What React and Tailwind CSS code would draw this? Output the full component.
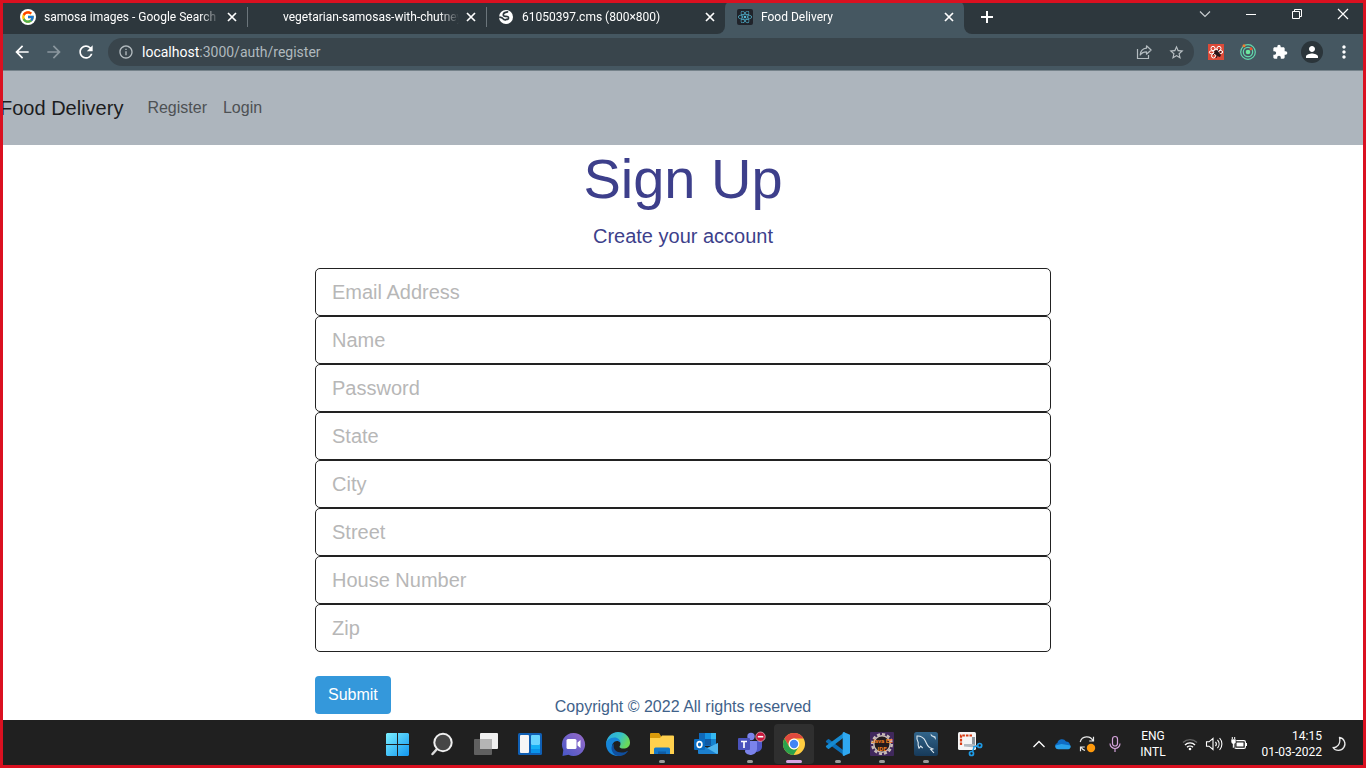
import React from 'react';
import {
  MdArrowBack,
  MdArrowForward,
  MdRefresh,
  MdInfoOutline,
  MdStarBorder,
  MdExtension,
  MdPerson,
  MdMoreVert,
} from 'react-icons/md';
import { FcGoogle } from 'react-icons/fc';
import { FaReact } from 'react-icons/fa';

const fields = [
  { id: 'email', label: 'Email Address', type: 'email' },
  { id: 'name', label: 'Name', type: 'text' },
  { id: 'password', label: 'Password', type: 'password' },
  { id: 'state', label: 'State', type: 'text' },
  { id: 'city', label: 'City', type: 'text' },
  { id: 'street', label: 'Street', type: 'text' },
  { id: 'house', label: 'House Number', type: 'text' },
  { id: 'zip', label: 'Zip', type: 'text' },
];

function GlobeIcon() {
  return (
    <svg viewBox="0 0 16 16" className="size-4">
      <circle cx="8" cy="8" r="7" fill="#fff" />
      <path
        d="M9.500 2.800C7.500 3 5.500 4 5.300 5.500c-.2 1.600 1.300 1.900 2.600 1.800 1.600-.1 2.600.4 2.600 1.600 0 1.300-1.200 1.700-2.300 1.500M1.800 8.200c1.400.2 2.600.5 3.200 1.500.5 1 1.300 1.300 2.600 1.200"
        fill="none"
        stroke="#2d373d"
        strokeWidth="1.700"
        strokeLinecap="round"
      />
    </svg>
  );
}

function GoogleBadge() {
  return (
    <span className="flex size-4 items-center justify-center rounded-full bg-white">
      <FcGoogle className="size-[14px]" />
    </span>
  );
}

function ReactBadge() {
  return (
    <span className="flex size-4 items-center justify-center rounded-xs bg-[#20232a]">
      <FaReact className="size-[14px] text-[#53b9d6]" />
    </span>
  );
}

function Cross() {
  return (
    <svg viewBox="0 0 16 16" className="size-4" fill="none" stroke="currentColor" strokeWidth="1.700">
      <path d="M4 4l8 8M12 4l-8 8" />
    </svg>
  );
}

function Tab({ title, icon, divider, active }) {
  return (
    <div
      className={
        active
          ? 'flex h-full w-[239px] shrink-0 items-center rounded-t-lg bg-[#455761] pr-[7px]'
          : 'flex h-full w-[239px] shrink-0 items-center pr-[7px]'
      }
    >
      <span className={divider ? 'h-5 w-px bg-[#6b757b]' : 'h-5 w-px'} />
      <span className="ml-[11px] size-4 shrink-0">{icon}</span>
      <span className="mr-1 ml-2 flex-1 overflow-hidden whitespace-nowrap [mask-image:linear-gradient(to_left,transparent,black_20px)]">
        {title}
      </span>
      <button type="button" aria-label="Close tab" className="size-4">
        <Cross />
      </button>
    </div>
  );
}

function TabStrip() {
  return (
    <div className="flex h-[34px] bg-[#455761] font-[Roboto,sans-serif] text-xs text-white">
      <div className="flex rounded-br-lg bg-[#2d373d] pl-2">
        <Tab title="samosa images - Google Search" icon={<GoogleBadge />} />
        <Tab title="vegetarian-samosas-with-chutney" divider />
        <Tab title="61050397.cms (800×800)" icon={<GlobeIcon />} divider />
      </div>
      <div className="bg-[#2d373d]">
        <Tab title="Food Delivery" icon={<ReactBadge />} active />
      </div>
      <div className="flex flex-1 rounded-bl-lg bg-[#2d373d]">
        <button type="button" aria-label="New tab" className="ml-[15px] size-4 self-center">
          <svg viewBox="0 0 16 16" fill="none" stroke="currentColor" strokeWidth="2">
            <path d="M8 2v12M2 8h12" />
          </svg>
        </button>
        <div className="ml-auto flex h-7">
          <button type="button" aria-label="Search tabs" className="flex w-[46px] items-center justify-center">
            <svg viewBox="0 0 12 12" className="size-3" fill="none" stroke="#c8cdd0" strokeWidth="1.200">
              <path d="M1 3.500l5 5 5-5" />
            </svg>
          </button>
          <button type="button" aria-label="Minimize" className="flex w-[46px] items-center justify-center">
            <svg viewBox="0 0 12 12" className="size-3" fill="none" stroke="currentColor">
              <path d="M1 6.500h10" />
            </svg>
          </button>
          <button type="button" aria-label="Restore" className="flex w-[46px] items-center justify-center">
            <svg viewBox="0 0 12 12" className="size-3" fill="none" stroke="currentColor">
              <path d="M1.500 3.500h7v7h-7zM3.500 3.500v-2h7v7h-2" />
            </svg>
          </button>
          <button type="button" aria-label="Close" className="flex w-[46px] items-center justify-center">
            <svg viewBox="0 0 12 12" className="size-3" fill="none" stroke="currentColor" strokeWidth="1.200">
              <path d="M1 1l10 10M11 1L1 11" />
            </svg>
          </button>
        </div>
      </div>
    </div>
  );
}

function ToolButton({ label, children }) {
  return (
    <button type="button" aria-label={label} className="flex h-7 w-8 shrink-0 items-center justify-center">
      {children}
    </button>
  );
}

function Toolbar() {
  return (
    <div className="flex h-[37px] items-center border-b border-[#76838b] bg-[#455761] px-1.5 text-white">
      <ToolButton label="Back">
        <MdArrowBack className="size-5" />
      </ToolButton>
      <ToolButton label="Forward">
        <MdArrowForward className="size-5 text-[#8b979e]" />
      </ToolButton>
      <ToolButton label="Reload">
        <MdRefresh className="size-5" />
      </ToolButton>
      <div className="mx-1.5 flex h-7 flex-1 items-center rounded-full bg-[#39454c] pl-2.5 pr-0.5">
        <MdInfoOutline className="size-4 text-[#b4bcc0]" />
        <a href="#address" className="ml-2 flex-1 font-[Roboto,sans-serif] text-sm text-[#b0b9be]">
          <span className="text-white">localhost</span>:3000/auth/register
        </a>
        <ToolButton label="Share this page">
          <svg viewBox="0 0 16 16" className="size-4" fill="none" stroke="#b4bcc0" strokeWidth="1.200">
            <path d="M1.500 5v9.500h11V11" />
            <path d="M10.500 1.800l4.600 4.200-4.600 4.200V7.800C7.600 7.800 5.600 8.800 4.200 11c.3-3.800 2.500-6.400 6.300-6.800z" strokeLinejoin="round" />
          </svg>
        </ToolButton>
        <ToolButton label="Bookmark this tab">
          <MdStarBorder className="size-[17px] text-[#b9c0c4]" />
        </ToolButton>
      </div>
      <ToolButton label="Image extension">
        <svg viewBox="0 0 16 16" className="size-4">
          <rect width="16" height="16" fill="#dc4a38" />
          <g fill="none" stroke="#fff" strokeWidth="1">
            <ellipse cx="5" cy="4.500" rx="2" ry="2.200" />
            <ellipse cx="11" cy="4.500" rx="2" ry="2.200" />
            <ellipse cx="3.500" cy="8.300" rx="2.200" ry="1.500" />
            <ellipse cx="12.500" cy="8" rx="2.200" ry="1.500" />
            <ellipse cx="5.500" cy="11.800" rx="2" ry="2.200" />
            <circle cx="8" cy="6.500" r="1.500" />
          </g>
          <path d="M6 7l3-1 4 5-1 2-3-1-2-2z" fill="#25151a" />
          <path d="M7 9l-2 2M9 12l-1 2M12 9l1-2M10 7l1-2" stroke="#25151a" />
        </svg>
      </ToolButton>
      <ToolButton label="Radar extension">
        <svg viewBox="0 0 16 16" className="size-4" fill="none">
          <circle cx="8" cy="8" r="7.300" stroke="#62d9ac" strokeWidth="1.200" />
          <circle cx="8" cy="8" r="4.700" stroke="#62d9ac" strokeWidth="1.200" />
          <circle cx="8" cy="8" r="2.300" fill="#6ee7a0" />
          <circle cx="4" cy="1.800" r="1.500" fill="#f08030" />
          <circle cx="11" cy="4.800" r="1.500" fill="#f0502c" />
        </svg>
      </ToolButton>
      <ToolButton label="Extensions">
        <MdExtension className="size-4" />
      </ToolButton>
      <ToolButton label="Profile">
        <span className="flex size-[22px] items-center justify-center rounded-full bg-[#2b353a]">
          <MdPerson className="size-[18px]" />
        </span>
      </ToolButton>
      <ToolButton label="Menu">
        <MdMoreVert className="size-5" />
      </ToolButton>
    </div>
  );
}

function SiteNav() {
  return (
    <nav className="flex h-[74px] items-center bg-[#adb5bd]">
      <a href="#home" className="mr-4 text-xl text-[#1c1d1f]">
        Food Delivery
      </a>
      <a href="#register" className="px-2 text-base text-[#4d5154]">
        Register
      </a>
      <a href="#login" className="px-2 text-base text-[#4d5154]">
        Login
      </a>
    </nav>
  );
}

function SignUp() {
  return (
    <main className="flex-1">
      <div className="mx-auto max-w-[736px]">
        <h1 className="mb-2 text-center text-[56px] leading-[68px] text-[#3d3f8b]">Sign Up</h1>
        <p className="mb-[17px] text-center text-xl leading-[30px] text-[#3d3f8b]">Create your account</p>
        <form id="sign-up" onSubmit={(event) => event.preventDefault()}>
          {fields.map((field) => (
            <input
              key={field.id}
              id={field.id}
              name={field.id}
              type={field.type}
              aria-label={field.label}
              placeholder={field.label}
              className="block h-12 w-full rounded-[5px] border border-[#222222] bg-white px-4 text-xl text-[#222222] placeholder:text-[#b7b7b7]"
            />
          ))}
        </form>
        <div className="mt-6 grid grid-cols-[1fr_auto_1fr]">
          <button
            type="submit"
            form="sign-up"
            className="h-[38px] self-start justify-self-start rounded bg-[#3498db] px-[13px] text-base text-white"
          >
            Submit
          </button>
          <footer className="mt-[19px] text-base leading-6 text-[#3f628a]">Copyright © 2022 All rights reserved</footer>
        </div>
      </div>
    </main>
  );
}

const apps = [
  {
    name: 'Start',
    art: (
      <>
        <linearGradient id="win" x1="0" y1="0" x2="1" y2="1">
          <stop offset="0" stopColor="#7aefff" />
          <stop offset="1" stopColor="#1296f0" />
        </linearGradient>
        <path d="M2 1h10v11H1V2zM13 1h10l1 1v10H13zM1 13h11v11H2l-1-1zM13 13h11v10l-1 1H13z" fill="url(#win)" />
      </>
    ),
  },
  {
    name: 'Search',
    art: (
      <>
        <path d="M8.500 16.500L3.500 22" stroke="#dcdcdc" strokeWidth="2.500" strokeLinecap="round" />
        <circle cx="14" cy="10.500" r="8.700" fill="#464646" stroke="#efefef" strokeWidth="2" />
      </>
    ),
  },
  {
    name: 'Task view',
    art: (
      <>
        <rect x="7" y="1" width="18" height="16" rx="1" fill="#f0f0f0" />
        <rect x="1" y="7" width="18" height="16" rx="1" fill="#606060" />
        <path d="M7 7h12v10H7z" fill="#b4b4b4" />
      </>
    ),
  },
  {
    name: 'Widgets',
    art: (
      <>
        <rect x="1" y="1" width="24" height="22" rx="1.500" fill="#0f5fb4" />
        <rect x="3" y="3" width="9" height="18" rx="1" fill="#f6f6f6" />
        <rect x="14" y="3" width="9" height="10" rx="1" fill="#69d5ff" />
        <path d="M14 13h9v4h-9z" fill="#14b0f4" />
        <path d="M14 17h9v4h-9z" fill="#0a94ea" />
      </>
    ),
  },
  {
    name: 'Chat',
    art: (
      <>
        <linearGradient id="chat" x1="0" y1="1" x2="1" y2="0">
          <stop offset="0" stopColor="#4657c8" />
          <stop offset="1" stopColor="#9a6bc8" />
        </linearGradient>
        <path d="M12.500 1a11.500 11.500 0 1 1-5 21.800L1.500 24l.8-6A11.500 11.500 0 0 1 12.500 1z" fill="url(#chat)" />
        <rect x="5.500" y="7" width="10" height="10" rx="1.500" fill="#fff" />
        <path d="M16.500 10.500l3-2.500v8l-3-2.500z" fill="#fff" />
      </>
    ),
  },
  {
    name: 'Edge',
    art: (
      <>
        <linearGradient id="edgeTop" x1="0" y1="0" x2="1" y2=".4">
          <stop offset="0" stopColor="#2aa7e0" />
          <stop offset=".6" stopColor="#35c1c8" />
          <stop offset="1" stopColor="#6ad85a" />
        </linearGradient>
        <path d="M1 12C1.500 5 6.500 0 13 0c7 0 12 5 12 10.500 0 4-3 6-6.500 6-2.500 0-4-.8-4-1.800 0-.7 1-1.200 1-3C15.500 9 13 7 10 7 5 7 1.500 10 1 12z" fill="url(#edgeTop)" />
        <path d="M1 12c0-3.500 4-6.500 8.500-6.500 3.500 0 6 2.500 6 5.500-1-1.500-2.500-2-3.500-2-3 0-5 3-5 6 0 4.500 3 8 8 9h-2C6 24 1 18.500 1 12z" fill="#1685d8" />
        <path d="M9 12c-1.500 5 2.500 8.500 7.500 8.500 3 0 5-1 6.500-1.800C21.500 22 17.500 24 14 24c-5 0-7.500-4.500-7.500-8 0-2 1-3.300 2.500-4z" fill="#104f9e" />
      </>
    ),
  },
  {
    name: 'File Explorer',
    running: true,
    art: (
      <>
        <path d="M1 2q0-1 1-1h8l2 3v4H1z" fill="#d99a0b" />
        <path d="M1 6h10l2-2.500h11q1 0 1 1V22H1z" fill="#ffd04d" />
        <path d="M5 22v-5q0-1.500 1.500-1.500h13q1.500 0 1.500 1.500v5z" fill="#1377c8" />
        <path d="M9 22v-2.500h8V22z" fill="#0f5ca5" />
      </>
    ),
  },
  {
    name: 'Outlook',
    art: (
      <>
        <path d="M6 1h17v13H6z" fill="#1068b8" />
        <path d="M12 1h6v6h-6z" fill="#1490df" />
        <path d="M18 1h5v6h-5z" fill="#35b8f1" />
        <path d="M12 7h6v6h-6z" fill="#0f5aa5" />
        <path d="M18 7h5v6h-5z" fill="#1583d0" />
        <path d="M5 12l10 4 10-5v10q0 1-1 1H6q-1 0-1-1z" fill="#1c80cf" />
        <path d="M25 11v10q0 1-1 1l-10-6z" fill="#4db4ee" />
        <rect x="1" y="7" width="11" height="11" rx="1" fill="#0a6cc0" />
        <ellipse cx="6.500" cy="12.500" rx="2.400" ry="2.900" fill="none" stroke="#fff" strokeWidth="1.600" />
      </>
    ),
  },
  {
    name: 'Teams',
    running: true,
    art: (
      <>
        <circle cx="14" cy="4.500" r="3.700" fill="#7b83eb" />
        <path d="M18 9h6q1 0 1 1v5a5 5 0 0 1-7 4.500z" fill="#5059c9" />
        <path d="M9 9h10q1 0 1 1v7a6.500 6.500 0 0 1-12 3z" fill="#7b83eb" />
        <rect x="1" y="6" width="12" height="12" rx="1" fill="#4b53bc" />
        <path d="M4 9.500h6M7 9.500V16" stroke="#fff" strokeWidth="1.700" />
        <circle cx="23.500" cy="4.700" r="4.700" fill="#c9183c" stroke="#e8c4cc" strokeWidth=".7" />
        <path d="M20.800 4.700h5.500" stroke="#fff" strokeWidth="1.600" />
      </>
    ),
  },
  {
    name: 'Chrome',
    running: true,
    active: true,
    art: (
      <>
        <circle cx="13" cy="12" r="11" fill="#ffcd40" />
        <path d="M3.470 6.500A11 11 0 0 1 22.530 6.500H13A5.500 5.500 0 0 0 8.200 14.700z" fill="#e04a3f" />
        <path d="M3.470 6.500A11 11 0 0 0 12.500 23L17.800 14.700A5.500 5.500 0 0 1 8.200 14.700z" fill="#2ba24c" />
        <circle cx="13" cy="12" r="5.400" fill="#fff" />
        <circle cx="13" cy="12" r="4.200" fill="#4285f4" />
      </>
    ),
  },
  {
    name: 'Visual Studio Code',
    running: true,
    art: (
      <>
        <path d="M1.200 8.800l1.700-1.500q.6-.5 1.200 0L20 19.500V24L1.200 10.200q-.8-.7 0-1.400z" fill="#0b6fb8" />
        <path d="M1.200 15.200l1.700 1.500q.6.500 1.200 0L20 4.500V0L1.200 13.800q-.8.700 0 1.400z" fill="#168bd2" />
        <path d="M18.500 0L25 2.700v18.600L18.500 24q-.8-.3-.8-1.200V1.200q0-.9.8-1.200z" fill="#2fa8f0" />
      </>
    ),
  },
  {
    name: 'Java EE IDE',
    running: true,
    art: (
      <>
        <rect x="1" width="24" height="24" rx="1" fill="#40285c" />
        <circle cx="13" cy="12" r="9.800" fill="none" stroke="#c8bcb8" strokeWidth="2.400" strokeDasharray="3.100 2" />
        <circle cx="13" cy="12" r="8.200" fill="#241a1c" stroke="#c8bcb8" strokeWidth="1.500" />
        <text x="13" y="10.500" textAnchor="middle" fontSize="6" fontWeight="700" fill="#ef7d20">
          Java EE
        </text>
        <text x="13" y="18.500" textAnchor="middle" fontSize="6" fontWeight="700" fill="#ef7d20">
          IDE
        </text>
      </>
    ),
  },
  {
    name: 'MySQL Workbench',
    running: true,
    art: (
      <>
        <linearGradient id="sql" x1="0" y1="0" x2="0" y2="1">
          <stop offset="0" stopColor="#32658b" />
          <stop offset="1" stopColor="#173a5a" />
        </linearGradient>
        <rect x="1" width="24" height="24" rx="2.500" fill="url(#sql)" />
        <path d="M6 16.500c-.8-2-1.200-4-.8-6C4 8 3.500 6 4 4c4-.2 7 2 8.500 5.200 1 2.200 1.500 4.500 4 6.300l3.300 1.500-2 .6 3.200 3.200M6 16.500l1.700-2.500 2 2" fill="none" stroke="#dce8f0" strokeWidth="1.100" />
        <path d="M17.500 1.500l.5 2.500 3 1.500 2 2.500-.5-3.500-3-1z" fill="#d0e0ea" />
      </>
    ),
  },
  {
    name: 'Snipping Tool',
    art: (
      <>
        <rect x="1" width="18" height="18" rx="1.500" fill="#f5f5f5" />
        <path d="M4 13V3.500h11" fill="none" stroke="#d83b12" strokeWidth="2.200" strokeDasharray="2.600 1" />
        <path d="M15 5h3v9.500h-3z" fill="#8e959c" />
        <path d="M7 12h9l5 2-3 1.500L7 14.500z" fill="#b4bac0" />
        <circle cx="14.500" cy="21.500" r="2" fill="none" stroke="#1e9be6" strokeWidth="1.700" />
        <circle cx="22.700" cy="13.500" r="2" fill="none" stroke="#1e9be6" strokeWidth="1.700" />
        <path d="M15.500 19.500l1.500-4M20.500 14l-4.500 1" stroke="#1e9be6" strokeWidth="1.500" />
      </>
    ),
  },
];

function AppButton({ app }) {
  return (
    <button type="button" aria-label={app.name} className="flex h-12 w-11 items-center justify-center">
      <span
        className={
          app.active
            ? 'relative flex size-10 items-center justify-center rounded bg-[#2f2f2f]'
            : 'relative flex size-10 items-center justify-center'
        }
      >
        <svg viewBox="0 0 26 24" className="h-6 w-[26px] overflow-visible">
          {app.art}
        </svg>
        {app.running && (
          <span
            className={
              app.active
                ? 'absolute bottom-px h-[3px] w-4 rounded-full bg-[#d6a6e4]'
                : 'absolute bottom-px h-[3px] w-1.5 rounded-full bg-[#9a9a9a]'
            }
          />
        )}
      </span>
    </button>
  );
}

function Tray() {
  return (
    <div className="flex items-center justify-end pr-[19px]">
      <button type="button" aria-label="Hidden icons" className="flex w-6 justify-center">
        <svg viewBox="0 0 14 14" className="size-3.5" fill="none" stroke="#fff" strokeWidth="1.300">
          <path d="M1.500 10L7 4.500l5.500 5.500" />
        </svg>
      </button>
      <button type="button" aria-label="OneDrive" className="flex w-6 justify-center">
        <svg viewBox="0 0 16 16" className="size-4">
          <path d="M3 13a3 3 0 0 1-.6-5.900A4.700 4.700 0 0 1 11 5.500 4 4 0 0 1 13 13z" fill="#0f6cc4" />
          <path d="M3 13.200A3 3 0 0 1 .5 9.500l6-1.500 9 1.500a2.700 2.700 0 0 1-2 3.700z" fill="#28a0ea" />
        </svg>
      </button>
      <button type="button" aria-label="Updates" className="flex w-6 justify-center">
        <svg viewBox="0 0 18 18" className="size-[18px]" fill="none" stroke="#e8e8e8" strokeWidth="1.200">
          <path d="M2.200 7A6.800 6.800 0 0 1 15 6M15.500 1.800V6h-4.300M7 15.500A6.800 6.800 0 0 1 3 12M2.500 16.300V12h4.300" />
          <circle cx="13" cy="13" r="4.200" fill="#ff9a0c" stroke="none" />
        </svg>
      </button>
      <button type="button" aria-label="Microphone" className="flex w-8 justify-center">
        <svg viewBox="0 0 12 18" className="h-[18px] w-3" fill="none" stroke="#d5a3dc" strokeWidth="1.200">
          <rect x="3.500" y="1.500" width="5" height="9.500" rx="2.500" />
          <path d="M1 8.500a5 5 0 0 0 10 0M6 13.500V17" />
        </svg>
      </button>
      <button type="button" className="w-11 text-xs leading-4 text-white">
        ENG
        <br />
        INTL
      </button>
      <button type="button" aria-label="Network, volume and battery" className="ml-1 flex w-[72px] items-center justify-around">
        <svg viewBox="0 0 16 16" className="size-4" fill="none" strokeWidth="1.400">
          <path d="M1 6.500a10 10 0 0 1 14 0" stroke="#666" />
          <path d="M3 9a7 7 0 0 1 10 0M5 11.300a4.300 4.300 0 0 1 6 0" stroke="#fff" />
          <circle cx="8" cy="13" r="1.300" fill="#fff" />
        </svg>
        <svg viewBox="0 0 18 16" className="h-4 w-[18px]" fill="none" stroke="#fff" strokeWidth="1.100">
          <path d="M1.500 5.800h2.500L8 2.500v11L4 10.200H1.500zM10.500 5.800a3.500 3.500 0 0 1 0 4.400M12.500 3.800a6.500 6.500 0 0 1 0 8.400M14.600 2a9 9 0 0 1 0 12" />
        </svg>
        <svg viewBox="0 0 18 16" className="h-4 w-[18px]">
          <rect x="4.600" y="4.600" width="10.800" height="7.800" rx="1.500" fill="none" stroke="#fff" strokeWidth="1.200" />
          <path d="M6.500 6.500h7v4h-7zM15.500 7H17v3h-1.500z" fill="#fff" />
          <path d="M1 3h5v3.500L4.500 8v4H2.600V8L1 6.500z" fill="#fff" stroke="#202020" strokeWidth=".6" />
          <path d="M2.300 1v2M4.700 1v2" stroke="#fff" />
        </svg>
      </button>
      <button type="button" className="w-[71px] text-right text-xs leading-4 text-white">
        14:15
        <br />
        01-03-2022
      </button>
      <button type="button" aria-label="Notifications" className="ml-[9px]">
        <svg viewBox="0 0 16 16" className="size-4" fill="none" stroke="#e8e8e8" strokeWidth="1.300">
          <path d="M8.500 1.500a6.500 6.500 0 1 1-6.500 10c4 .5 8-3.500 6.500-10z" strokeLinejoin="round" />
        </svg>
      </button>
    </div>
  );
}

function Taskbar() {
  return (
    <div className="grid h-12 grid-cols-[1fr_auto_1fr] bg-[#202020] font-[Roboto,sans-serif]">
      <div />
      <div className="flex pl-0.5">
        {apps.map((app) => (
          <AppButton key={app.name} app={app} />
        ))}
      </div>
      <Tray />
    </div>
  );
}

export default function App() {
  return (
    <div className="relative flex min-h-screen flex-col bg-white font-['Liberation_Sans',Arial,sans-serif]">
      <header>
        <TabStrip />
        <Toolbar />
      </header>
      <SiteNav />
      <SignUp />
      <Taskbar />
      <div className="pointer-events-none absolute inset-0 border-[3px] border-[#da1020]" />
    </div>
  );
}
